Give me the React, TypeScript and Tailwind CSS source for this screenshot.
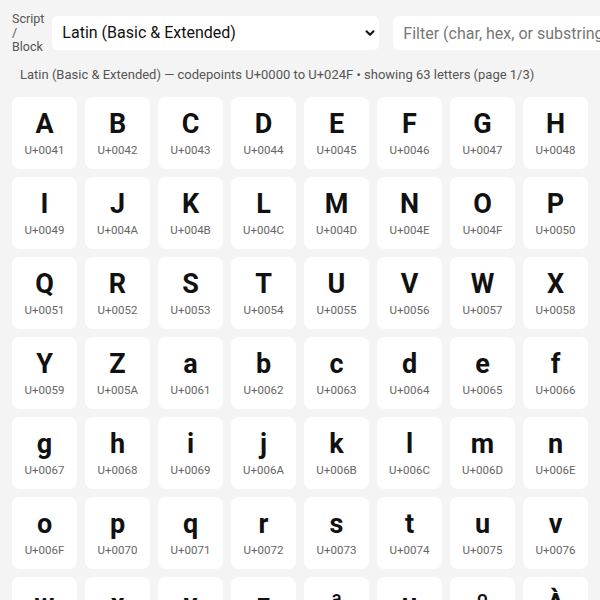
import React from "react";

const LETTERS = [
  "A","B","C","D","E","F","G","H","I","J","K","L","M","N","O","P","Q","R","S","T","U","V","W","X","Y","Z",
  "a","b","c","d","e","f","g","h","i","j","k","l","m","n","o","p","q","r","s","t","u","v","w","x","y","z",
  "ª","µ","º","À",
];

function hex(ch: string) {
  return "U+" + ch.codePointAt(0)!.toString(16).toUpperCase().padStart(4, "0");
}

export default function App() {
  return (
    <div
      className="min-h-screen w-full overflow-hidden bg-[#f4f4f4] text-[#111]"
      style={{ fontFamily: "Roboto, 'Noto Sans', sans-serif" }}
    >
      {/* Controls */}
      <div className="flex items-center gap-2 px-3 pt-3">
        <label className="text-[12.5px] leading-[14px] text-[#555]">Script / Block</label>
        <div className="relative w-[327px] shrink-0">
          <select className="h-[34px] w-full appearance-none rounded-md bg-white pl-[10px] pr-8 text-[16px] text-[#111] outline-none">
            <option>Latin (Basic &amp; Extended)</option>
          </select>
          <svg
            className="pointer-events-none absolute right-[2px] top-1/2 size-[14px] -translate-y-1/2"
            viewBox="0 0 24 24"
            fill="none"
            stroke="#111"
            strokeWidth="3.5"
            strokeLinecap="round"
            strokeLinejoin="round"
          >
            <path d="M6 9l6 6 6-6" />
          </svg>
        </div>
        <input
          className="ml-[6px] h-[34px] w-[240px] shrink-0 rounded-md bg-white px-[10px] text-[16px] outline-none placeholder:text-[#777]"
          placeholder="Filter (char, hex, or substring)"
        />
      </div>

      <p className="px-5 pt-[11px] text-[13px] text-[#555]">
        Latin (Basic &amp; Extended) — codepoints U+0000 to U+024F • showing 63 letters (page 1/3)
      </p>

      {/* Grid */}
      <div className="grid grid-cols-8 gap-2 px-3 pt-[12px]">
        {LETTERS.map((ch) => (
          <div
            key={ch}
            className="flex h-[72px] flex-col items-center justify-center rounded-lg bg-white"
          >
            <span className="text-[27px] font-bold leading-[30px] text-[#111]">{ch}</span>
            <span className="mt-[4px] text-[11.5px] leading-[14px] text-[#666]">{hex(ch)}</span>
          </div>
        ))}
      </div>
    </div>
  );
}
